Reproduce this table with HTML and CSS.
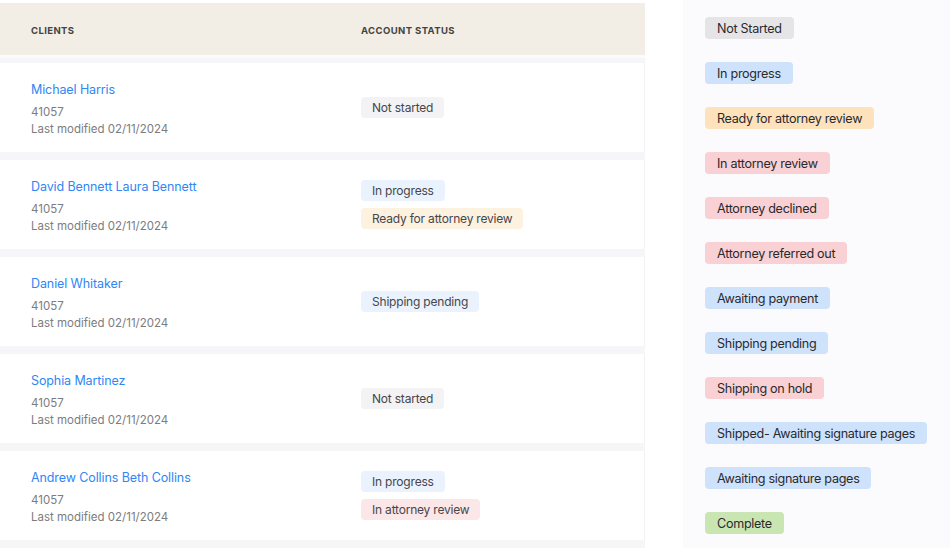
FILE: index.html
```html
<!DOCTYPE html>
<html lang="en">
<head>
<meta charset="utf-8">
<title>Clients</title>
<link rel="stylesheet" href="styles.css">
</head>
<body>
<div class="page">
  <section class="table">
    <div class="thead">
      <div class="col-client">Clients</div>
      <div class="col-status">Account status</div>
    </div>
    <div class="tbody">
      <div class="row">
        <div class="col-client">
          <a class="name">Michael Harris</a>
          <div class="meta">41057</div>
          <div class="meta">Last modified 02/11/2024</div>
        </div>
        <div class="col-status">
          <span class="tag tag-gray">Not started</span>
        </div>
      </div>
      <div class="row">
        <div class="col-client">
          <a class="name">David Bennett Laura Bennett</a>
          <div class="meta">41057</div>
          <div class="meta">Last modified 02/11/2024</div>
        </div>
        <div class="col-status">
          <span class="tag tag-blue">In progress</span>
          <span class="tag tag-orange">Ready for attorney review</span>
        </div>
      </div>
      <div class="row">
        <div class="col-client">
          <a class="name">Daniel Whitaker</a>
          <div class="meta">41057</div>
          <div class="meta">Last modified 02/11/2024</div>
        </div>
        <div class="col-status">
          <span class="tag tag-blue">Shipping pending</span>
        </div>
      </div>
      <div class="row">
        <div class="col-client">
          <a class="name">Sophia Martinez</a>
          <div class="meta">41057</div>
          <div class="meta">Last modified 02/11/2024</div>
        </div>
        <div class="col-status">
          <span class="tag tag-gray">Not started</span>
        </div>
      </div>
      <div class="row">
        <div class="col-client">
          <a class="name">Andrew Collins Beth Collins</a>
          <div class="meta">41057</div>
          <div class="meta">Last modified 02/11/2024</div>
        </div>
        <div class="col-status">
          <span class="tag tag-blue">In progress</span>
          <span class="tag tag-red">In attorney review</span>
        </div>
      </div>
    </div>
  </section>
  <div class="spacer"></div>
  <aside class="legend">
    <span class="chip chip-gray">Not Started</span>
    <span class="chip chip-blue">In progress</span>
    <span class="chip chip-orange">Ready for attorney review</span>
    <span class="chip chip-red">In attorney review</span>
    <span class="chip chip-red">Attorney declined</span>
    <span class="chip chip-red">Attorney referred out</span>
    <span class="chip chip-blue">Awaiting payment</span>
    <span class="chip chip-blue">Shipping pending</span>
    <span class="chip chip-red">Shipping on hold</span>
    <span class="chip chip-blue">Shipped- Awaiting signature pages</span>
    <span class="chip chip-blue">Awaiting signature pages</span>
    <span class="chip chip-green">Complete</span>
  </aside>
</div>
</body>
</html>
```

FILE: styles.css
```css
* { box-sizing: border-box; }
html, body {
  margin: 0;
  padding: 0;
  background: #ffffff;
  font-family: Inter, "Noto Sans", "Liberation Sans", sans-serif;
  color: #2b2b2b;
}
.page {
  display: flex;
  width: 950px;
  height: 548px;
  overflow: hidden;
}
.table {
  width: 645px;
  flex: none;
  padding-top: 3px;
  display: flex;
  flex-direction: column;
}
.thead {
  height: 52px;
  background: #f2eee5;
  display: flex;
  align-items: center;
  padding-left: 31px;
  padding-top: 2px;
  font-size: 9.5px;
  font-weight: 700;
  letter-spacing: 0.4px;
  text-transform: uppercase;
  color: #45433f;
}
.col-client { width: 330px; flex: none; }
.col-status {
  flex: 1;
  display: flex;
  flex-direction: column;
  align-items: flex-start;
  gap: 7px;
}
.tbody {
  flex: 1;
  background: #f6f5f8;
  padding-top: 5px;
  display: flex;
  flex-direction: column;
  gap: 8px;
  border-top: 3px solid #fbfbfd;
}
.row {
  height: 89px;
  flex: none;
  background: #ffffff;
  display: flex;
  align-items: center;
  padding-left: 31px;
  border-right: 1px solid #f1f0f4;
}
.row .col-client {
  align-self: flex-start;
  padding-top: 19px;
}
.name {
  display: block;
  color: #2f86f4;
  font-size: 12.5px;
  line-height: 16px;
  margin-bottom: 6px;
  letter-spacing: -0.1px;
  white-space: nowrap;
}
.meta {
  font-size: 11.5px;
  line-height: 17px;
  color: #7c7c80;
}
.tag {
  display: inline-block;
  height: 21px;
  line-height: 21px;
  padding: 0 11px;
  border-radius: 4px;
  font-size: 12px;
  letter-spacing: -0.2px;
  color: #46464a;
  white-space: nowrap;
}
.tag-gray { background: #f3f2f5; }
.tag-blue { background: #eaf2fd; }
.tag-orange { background: #fdf1e0; }
.tag-red { background: #fce7e8; }

.spacer {
  width: 38px;
  flex: none;
  background: #ffffff;
}
.legend {
  flex: 1;
  background: #fbfbfd;
  padding: 17px 0 0 22px;
  display: flex;
  flex-direction: column;
  align-items: flex-start;
  gap: 23px;
}
.chip {
  display: inline-block;
  height: 22px;
  line-height: 23px;
  padding: 0 12px;
  border-radius: 4px;
  font-size: 12.6px;
  letter-spacing: -0.3px;
  color: #2a2a2e;
  white-space: nowrap;
}
.chip-gray { background: #e5e5e8; }
.chip-blue { background: #cee2fc; }
.chip-orange { background: #fde2bc; }
.chip-red { background: #f9d0d3; }
.chip-green { background: #c9e5b1; }
```
